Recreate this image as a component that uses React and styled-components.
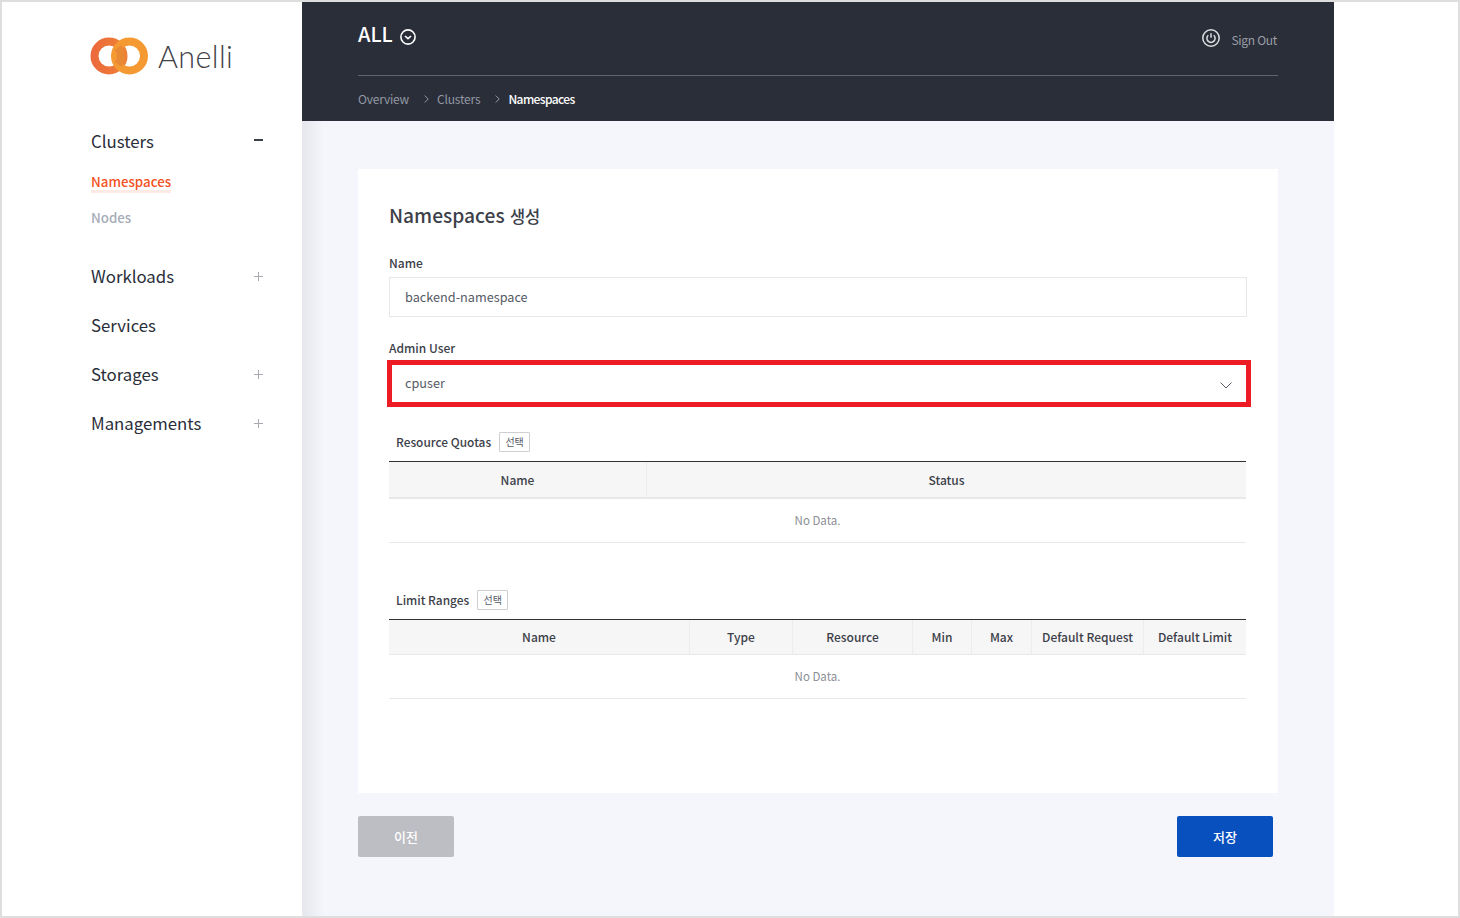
import React from 'react';
import styled, {createGlobalStyle} from 'styled-components';

const FONT = '"Noto Sans CJK KR", "Noto Sans", sans-serif';

const GlobalStyle = createGlobalStyle`
  html, body {
    margin: 0;
    padding: 0;
    background: #fff;
  }
  body {
    font-family: ${FONT};
  }
`;

const Frame = styled.div`
  box-sizing: border-box;
  width: 1460px;
  height: 918px;
  border: 2px solid #dedede;
  display: grid;
  grid-template-columns: 300px 1032px 1fr;
  background: #fff;
  overflow: hidden;
`;

const Sidebar = styled.aside`
  padding: 35px 38px 0 89px;
`;

const Logo = styled.div`
  display: flex;
  align-items: center;
  gap: 9px;
  height: 38px;
  margin: 0 0 41px -1px;
`;

const LogoText = styled.span`
  font-family: 'Lato', sans-serif;
  font-weight: 300;
  font-size: 30.5px;
  line-height: 38px;
  color: #3f4247;
  letter-spacing: 0.4px;
`;

const NavItem = styled.div`
  display: flex;
  align-items: center;
  justify-content: space-between;
  height: 49px;
  font-size: 16.8px;
  color: #2a2e39;
  padding-right: 1px;
`;

const SubNav = styled.div`
  display: flex;
  flex-direction: column;
  padding: 0 0 15px;
  margin-top: -1px;
`;

const SubItem = styled.div`
  height: 36px;
  line-height: 35px;
  font-size: 13.3px;
  font-weight: 500;
  color: ${p => (p.$active ? '#f4511e' : '#a6acb9')};
  span {
    display: inline-block;
    line-height: 16px;
    ${p => p.$active && 'border-bottom: 3px solid #fdeae5;'}
  }
`;

const Main = styled.main`
  display: flex;
  flex-direction: column;
  background: linear-gradient(to right, #e6e7ec, #f5f6fb 22px);
`;

const Header = styled.header`
  height: 119px;
  flex: none;
  box-sizing: border-box;
  background: #2a2e39;
  padding: 0 56px;
`;

const HeaderTop = styled.div`
  height: 73px;
  border-bottom: 1px solid #5f636e;
  display: flex;
  justify-content: space-between;
  align-items: flex-start;
`;

const AllButton = styled.div`
  display: flex;
  align-items: center;
  gap: 7px;
  margin-top: 16px;
  height: 30px;
  font-size: 20px;
  font-weight: 500;
  color: #fff;
  svg {
    margin-top: 7px;
  }
`;

const SignOut = styled.div`
  display: flex;
  align-items: center;
  gap: 11px;
  margin-top: 26px;
  padding-right: 1px;
  font-size: 12px;
  letter-spacing: -0.3px;
  color: #9b9ea6;
  line-height: 20px;
  span {
    position: relative;
    top: 2px;
  }
`;

const Breadcrumb = styled.nav`
  display: flex;
  align-items: center;
  height: 45px;
  font-size: 12px;
  color: #9398a3;
`;

const Crumb = styled.span`
  color: ${p => (p.$current ? '#fff' : '#9398a3')};
  font-weight: ${p => (p.$current ? 500 : 400)};
  letter-spacing: ${p => (p.$current ? '-0.6px' : '-0.2px')};
`;

const CrumbSep = styled.svg`
  width: 5px;
  height: 8px;
  margin: 0 8px 0 15px;
  flex: none;
`;

const Content = styled.div`
  padding: 48px 56px 0;
`;

const Card = styled.section`
  box-sizing: border-box;
  height: 624px;
  background: #fff;
  padding: 32px 31px 0;
`;

const Title = styled.h2`
  margin: 0 0 23px;
  font-size: 19.2px;
  line-height: 29px;
  font-weight: 500;
  color: #3c4049;
  span {
    font-size: 16.5px;
    margin-left: 1px;
  }
`;

const Label = styled.label`
  display: block;
  font-size: 12px;
  line-height: 18px;
  font-weight: 500;
  color: #3c4049;
  margin-bottom: 5px;
`;

const Input = styled.div`
  box-sizing: border-box;
  height: 40px;
  width: 858px;
  border: 1px solid #e8e8e8;
  padding: 0 15px;
  font-size: 12.7px;
  line-height: 37px;
  color: #555a65;
  margin-bottom: 22px;
`;

const Select = styled.div`
  box-sizing: border-box;
  width: 864px;
  height: 47px;
  margin: -2px 0 0 -2px;
  border: 5px solid #ed1c24;
  padding: 0 14px 2px 13px;
  display: flex;
  align-items: center;
  justify-content: space-between;
  font-size: 12.7px;
  color: #555a65;
  svg {
    margin-top: 6px;
  }
`;

const SectionHead = styled.div`
  display: flex;
  align-items: center;
  gap: 8px;
  height: 20px;
  padding-left: 7px;
  margin-top: ${p => p.$top}px;
  margin-bottom: ${p => p.$bottom}px;
`;

const SectionLabel = styled.span`
  font-size: 11.9px;
  font-weight: 500;
  color: #3c4049;
  margin-bottom: 2px;
`;

const PickButton = styled.span`
  box-sizing: border-box;
  width: 31px;
  height: 20px;
  border: 1px solid #cfcfcf;
  border-radius: 1px;
  font-size: 10px;
  line-height: 17px;
  font-weight: 400;
  text-align: center;
  color: #555a65;
`;

const Table = styled.div`
  width: 857px;
  border-top: 1px solid #2f3136;
`;

const HeadRow = styled.div`
  display: grid;
  grid-template-columns: ${p => p.$columns};
  height: ${p => p.$height}px;
  box-sizing: border-box;
  background: #f6f6f6;
  border-bottom: ${p => p.$rule}px solid #e8e8e8;
`;

const HeadCell = styled.div`
  display: flex;
  align-items: center;
  justify-content: center;
  padding-bottom: ${p => p.$lift}px;
  font-size: 12px;
  font-weight: 500;
  color: #3c4049;
  border-left: ${p => (p.$first ? 'none' : '1px solid #ececec')};
  white-space: nowrap;
`;

const EmptyRow = styled.div`
  height: ${p => p.$height}px;
  box-sizing: border-box;
  display: flex;
  align-items: center;
  justify-content: center;
  padding-bottom: 2px;
  font-size: 11.5px;
  color: #8b8e95;
  border-bottom: 1px solid #e8e8e8;
`;

const Footer = styled.div`
  display: flex;
  justify-content: space-between;
  padding: 23px 5px 0 0;
`;

const Button = styled.button`
  width: 96px;
  height: 41px;
  border: none;
  border-radius: 2px;
  font-family: ${FONT};
  font-size: 13px;
  font-weight: 500;
  color: #fff;
  background: ${p => (p.$primary ? '#0750bd' : '#bdbec3')};
`;

const PlusSvg = styled.svg`
  margin-top: 1px;
`;

const NAV_BELOW = [
  {label: 'Workloads', expandable: true},
  {label: 'Services'},
  {label: 'Storages', expandable: true},
  {label: 'Managements', expandable: true},
];

const QUOTA_COLUMNS = [{label: 'Name'}, {label: 'Status'}];
const LIMIT_COLUMNS = [
  {label: 'Name'},
  {label: 'Type'},
  {label: 'Resource'},
  {label: 'Min'},
  {label: 'Max'},
  {label: 'Default Request'},
  {label: 'Default Limit'},
];

const AnelliMark = () => (
  <svg width="59" height="38" viewBox="0 0 59 38" fill="none">
    <defs>
      <linearGradient id="ringLeft" x1="0" y1="0" x2="1" y2="0">
        <stop offset="0" stopColor="#ec6a3b" />
        <stop offset="1" stopColor="#ef8037" />
      </linearGradient>
    </defs>
    <circle cx="19" cy="19" r="14.5" stroke="url(#ringLeft)" strokeWidth="8" />
    <circle cx="39.5" cy="19" r="14.5" stroke="#f59a33" strokeWidth="8" />
    <path d="M28 10.5a14.5 14.5 0 0 1 0 17" stroke="#e88a35" strokeWidth="8" />
  </svg>
);

const PlusIcon = () => (
  <PlusSvg width="9" height="9" viewBox="0 0 9 9">
    <path d="M4.5 0v9M0 4.5h9" stroke="#a9abb0" strokeWidth="1" />
  </PlusSvg>
);

const MinusIcon = () => (
  <svg width="9" height="9" viewBox="0 0 9 9">
    <path d="M0 4h9" stroke="#3c4049" strokeWidth="2" />
  </svg>
);

const CircleChevron = () => (
  <svg width="16" height="16" viewBox="0 0 16 16" fill="none" stroke="#fff">
    <circle cx="8" cy="8" r="7.1" strokeWidth="1.6" />
    <path d="M5 7l3 2.6L11 7" strokeWidth="1.6" />
  </svg>
);

const PowerIcon = () => (
  <svg width="18" height="18" viewBox="0 0 18 18" fill="none" stroke="#dcdde0">
    <circle cx="9" cy="9" r="8.2" strokeWidth="1.5" />
    <path d="M6.3 6.2a4.1 4.1 0 1 0 5.4 0M9 4.2v4.6" strokeWidth="1.5" />
  </svg>
);

const Separator = () => (
  <CrumbSep viewBox="0 0 5 8" fill="none" stroke="#9398a3">
    <path d="M.7 .5L4.2 4 .7 7.5" />
  </CrumbSep>
);

const SelectChevron = () => (
  <svg width="12" height="7" viewBox="0 0 12 7" fill="none" stroke="#555a65">
    <path d="M.5.5L6 6 11.5.5" />
  </svg>
);

const DataTable = ({columns, template, headHeight, rule, lift, rowHeight}) => (
  <Table>
    <HeadRow $columns={template} $height={headHeight} $rule={rule}>
      {columns.map(({label}, i) => (
        <HeadCell key={label} $first={i === 0} $lift={lift}>
          {label}
        </HeadCell>
      ))}
    </HeadRow>
    <EmptyRow $height={rowHeight}>No Data.</EmptyRow>
  </Table>
);

export default function App() {
  return (
    <>
      <GlobalStyle />
      <Frame>
        <Sidebar>
          <Logo>
            <AnelliMark />
            <LogoText>Anelli</LogoText>
          </Logo>
          <NavItem>
            Clusters
            <MinusIcon />
          </NavItem>
          <SubNav>
            <SubItem $active>
              <span>Namespaces</span>
            </SubItem>
            <SubItem>
              <span>Nodes</span>
            </SubItem>
          </SubNav>
          {NAV_BELOW.map(({label, expandable}) => (
            <NavItem key={label}>
              {label}
              {expandable && <PlusIcon />}
            </NavItem>
          ))}
        </Sidebar>

        <Main>
          <Header>
            <HeaderTop>
              <AllButton>
                ALL
                <CircleChevron />
              </AllButton>
              <SignOut>
                <PowerIcon />
                <span>Sign Out</span>
              </SignOut>
            </HeaderTop>
            <Breadcrumb>
              <Crumb>Overview</Crumb>
              <Separator />
              <Crumb>Clusters</Crumb>
              <Separator />
              <Crumb $current>Namespaces</Crumb>
            </Breadcrumb>
          </Header>

          <Content>
            <Card>
              <Title>
                Namespaces <span>생성</span>
              </Title>
              <Label>Name</Label>
              <Input>backend-namespace</Input>
              <Label>Admin User</Label>
              <Select>
                cpuser
                <SelectChevron />
              </Select>

              <SectionHead $top={25} $bottom={9}>
                <SectionLabel>Resource Quotas</SectionLabel>
                <PickButton>선택</PickButton>
              </SectionHead>
              <DataTable
                columns={QUOTA_COLUMNS}
                template="257px 1fr"
                headHeight={37}
                rule={2}
                lift={0}
                rowHeight={44}
              />

              <SectionHead $top={47} $bottom={9}>
                <SectionLabel>Limit Ranges</SectionLabel>
                <PickButton>선택</PickButton>
              </SectionHead>
              <DataTable
                columns={LIMIT_COLUMNS}
                template="300px 103px 120px 59px 60px 112px 1fr"
                headHeight={35}
                rule={1}
                lift={2}
                rowHeight={44}
              />
            </Card>
            <Footer>
              <Button>이전</Button>
              <Button $primary>저장</Button>
            </Footer>
          </Content>
        </Main>

        <div />
      </Frame>
    </>
  );
}
